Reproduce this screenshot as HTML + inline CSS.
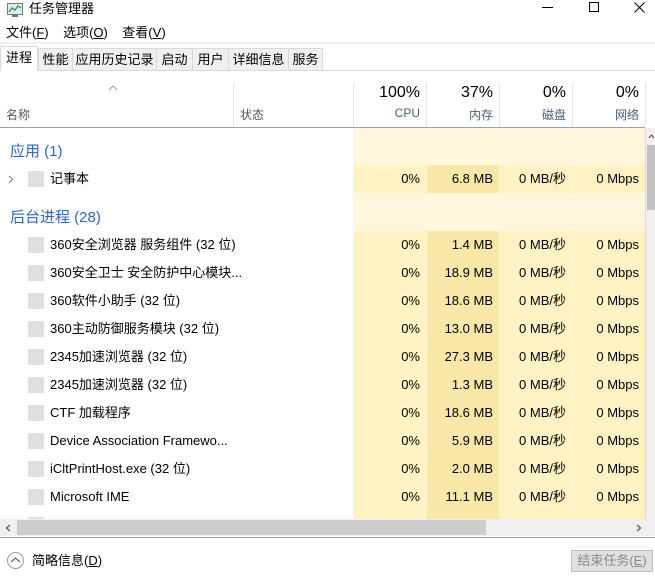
<!DOCTYPE html>
<html><head><meta charset="utf-8"><style>
*{margin:0;padding:0;box-sizing:border-box}
body{width:655px;height:578px;background:#fff;position:relative;overflow:hidden;font-family:"Liberation Sans","Noto Sans CJK SC",sans-serif;font-size:13px;color:#000}
.a{position:absolute;white-space:nowrap}
.tab{position:absolute;top:48px;height:23px;border:1px solid #d9d9d9;background:#f0f0f0;font-size:13px;line-height:21px;text-align:center}
.col{position:absolute;top:128px;height:391px;background:#fff7dd;border-right:1px solid #f0dca2}
.r{position:absolute;left:0;width:645px;height:28px}
.c{position:absolute;top:0;height:28px;line-height:28px;text-align:right;padding-right:6px;font-size:13px}
.ic{position:absolute;left:28px;top:6px;width:16px;height:16px;background:#e0e0e0}
.nm{position:absolute;left:50px;top:0;line-height:28px}
.g{position:absolute;left:10px;font-size:15px;color:#2e67c8}
</style></head><body>
<svg class="a" style="left:6px;top:2px" width="18" height="16" viewBox="0 0 18 16"><rect x="1.5" y="1.5" width="15" height="11" fill="#dfeaf2" stroke="#6a7c8a"/><polyline points="3,10 6,6 9,8 12,4 15,6" fill="none" stroke="#3a8a3a" stroke-width="1.2"/><rect x="6" y="13" width="6" height="2" fill="#6a7c8a"/></svg>
<div class="a" style="left:29px;top:0;line-height:18px;font-size:13px">任务管理器</div>
<div class="a" style="left:542px;top:7px;width:11px;height:1px;background:#000"></div>
<div class="a" style="left:589px;top:2px;width:10px;height:10px;border:1px solid #000"></div>
<svg class="a" style="left:634px;top:2px" width="11" height="11"><path d="M0.5 0.5L10.5 10.5M10.5 0.5L0.5 10.5" stroke="#000" stroke-width="1"/></svg>
<div class="a" style="left:6px;top:24px;line-height:18px">文件(<u>F</u>)&nbsp;&nbsp;&nbsp;&nbsp;选项(<u>O</u>)&nbsp;&nbsp;&nbsp;&nbsp;查看(<u>V</u>)</div>
<div class="a" style="left:0;top:42px;width:655px;height:2px;background:#f0f0f0"></div>
<div class="a" style="left:0;top:70px;width:655px;height:1px;background:#d9d9d9"></div>
<div class="tab" style="left:0;top:46px;width:38px;height:25px;background:#fff;border-bottom:none;line-height:22px">进程</div>
<div class="tab" style="left:38px;width:35px">性能</div>
<div class="tab" style="left:72px;width:85px">应用历史记录</div>
<div class="tab" style="left:156px;width:37px">启动</div>
<div class="tab" style="left:192px;width:37px">用户</div>
<div class="tab" style="left:228px;width:61px">详细信息</div>
<div class="tab" style="left:288px;width:35px">服务</div>
<svg class="a" style="left:108px;top:85px" width="10" height="6"><polyline points="1,5 5,1 9,5" fill="none" stroke="#999" stroke-width="1"/></svg>
<div class="a" style="left:6px;top:106px;color:#555;font-size:12px">名称</div>
<div class="a" style="left:240px;top:106px;color:#555;font-size:12px">状态</div>
<div class="a" style="left:233px;top:83px;width:1px;height:44px;background:#e5e5e5"></div>
<div class="a" style="left:353px;top:83px;width:1px;height:44px;background:#e5e5e5"></div>
<div class="a" style="left:426px;top:83px;width:1px;height:44px;background:#e5e5e5"></div>
<div class="a" style="left:499px;top:83px;width:1px;height:44px;background:#e5e5e5"></div>
<div class="a" style="left:572px;top:83px;width:1px;height:44px;background:#e5e5e5"></div>
<div class="a" style="left:645px;top:83px;width:1px;height:44px;background:#e5e5e5"></div>
<div class="a" style="left:354px;top:84px;width:66px;text-align:right;font-size:16px">100%</div>
<div class="a" style="left:427px;top:84px;width:66px;text-align:right;font-size:16px">37%</div>
<div class="a" style="left:500px;top:84px;width:66px;text-align:right;font-size:16px">0%</div>
<div class="a" style="left:573px;top:84px;width:66px;text-align:right;font-size:16px">0%</div>
<div class="a" style="left:354px;top:106px;width:66px;text-align:right;font-size:12px;color:#4c607a">CPU</div>
<div class="a" style="left:427px;top:106px;width:66px;text-align:right;font-size:12px;color:#4c607a">内存</div>
<div class="a" style="left:500px;top:106px;width:66px;text-align:right;font-size:12px;color:#4c607a">磁盘</div>
<div class="a" style="left:573px;top:106px;width:66px;text-align:right;font-size:12px;color:#4c607a">网络</div>
<div class="a" style="left:0;top:127px;width:645px;height:1px;background:#a0a0a0"></div>
<div class="col" style="left:353px;width:74px"></div>
<div class="col" style="left:426px;width:74px"></div>
<div class="col" style="left:499px;width:74px"></div>
<div class="col" style="left:572px;width:74px"></div>
<div class="g" style="top:140px">应用 (1)</div>
<div class="g" style="top:206px">后台进程 (28)</div>
<div class="r" style="top:165px">
<svg class="a" style="left:8px;top:10px" width="6" height="9"><polyline points="1,1 4.5,4.5 1,8" fill="none" stroke="#888" stroke-width="1.2"/></svg>
<div class="ic"></div><div class="nm">记事本</div>
<div class="c" style="left:354px;width:72px;background:#fff3c4">0%</div>
<div class="c" style="left:427px;width:72px;background:#f9e8a8">6.8 MB</div>
<div class="c" style="left:500px;width:72px;background:#fff3c4">0 MB/秒</div>
<div class="c" style="left:573px;width:72px;background:#fff3c4">0 Mbps</div>
</div>
<div id="rows"></div>
<script>
var d=[["360安全浏览器 服务组件 (32 位)","1.4 MB"],["360安全卫士 安全防护中心模块...","18.9 MB"],["360软件小助手 (32 位)","18.6 MB"],["360主动防御服务模块 (32 位)","13.0 MB"],["2345加速浏览器 (32 位)","27.3 MB"],["2345加速浏览器 (32 位)","1.3 MB"],["CTF 加载程序","18.6 MB"],["Device Association Framewo...","5.9 MB"],["iCltPrintHost.exe (32 位)","2.0 MB"],["Microsoft IME","11.1 MB"]];
var h="";d.forEach(function(r,i){var t=231+i*28;h+='<div class="r" style="top:'+t+'px"><div class="ic"></div><div class="nm">'+r[0]+'</div><div class="c" style="left:354px;width:72px;background:#fff3c4">0%</div><div class="c" style="left:427px;width:72px;background:#f9e8a8">'+r[1]+'</div><div class="c" style="left:500px;width:72px;background:#fff3c4">0 MB/秒</div><div class="c" style="left:573px;width:72px;background:#fff3c4">0 Mbps</div></div>';});
h+='<div class="a" style="left:28px;top:517px;width:16px;height:2px;background:#e0e0e0"></div>';
h+='<div class="a" style="left:354px;top:511px;width:291px;height:8px;background:#fff3c4"></div><div class="a" style="left:427px;top:511px;width:72px;height:8px;background:#f9e8a8"></div>';
document.getElementById("rows").innerHTML=h;
</script>
<div class="a" style="left:646px;top:128px;width:9px;height:391px;background:#f0f0f0"></div>
<div class="a" style="left:647px;top:145px;width:8px;height:65px;background:#c2c2c2"></div>
<svg class="a" style="left:648px;top:134px" width="7" height="5"><polyline points="1,4 3.5,1 6,4" fill="none" stroke="#606060" stroke-width="1.2"/></svg>
<div class="a" style="left:0;top:519px;width:655px;height:17px;background:#f0f0f0"></div>
<div class="a" style="left:17px;top:520px;width:469px;height:15px;background:#cdcdcd"></div>
<svg class="a" style="left:5px;top:524px" width="6" height="8"><polyline points="5,1 1.5,4 5,7" fill="none" stroke="#606060" stroke-width="1.4"/></svg>
<svg class="a" style="left:636px;top:524px" width="6" height="8"><polyline points="1,1 4.5,4 1,7" fill="none" stroke="#606060" stroke-width="1.4"/></svg>
<div class="a" style="left:0;top:537px;width:655px;height:1px;background:#a0a0a0"></div>
<div class="a" style="left:7px;top:552px;width:17px;height:17px;border:1px solid #999;border-radius:50%"></div>
<svg class="a" style="left:10px;top:556px" width="11" height="8"><polyline points="1,6 5.5,2 10,6" fill="none" stroke="#666" stroke-width="1.2"/></svg>
<div class="a" style="left:32px;top:552px;line-height:17px">简略信息(<u>D</u>)</div>
<div class="a" style="left:571px;top:550px;width:82px;height:22px;border:1px solid #bfbfbf;background:#e0e0e0;color:#8a8a8a;text-align:center;line-height:20px">结束任务(<u>E</u>)</div>
</body></html>
